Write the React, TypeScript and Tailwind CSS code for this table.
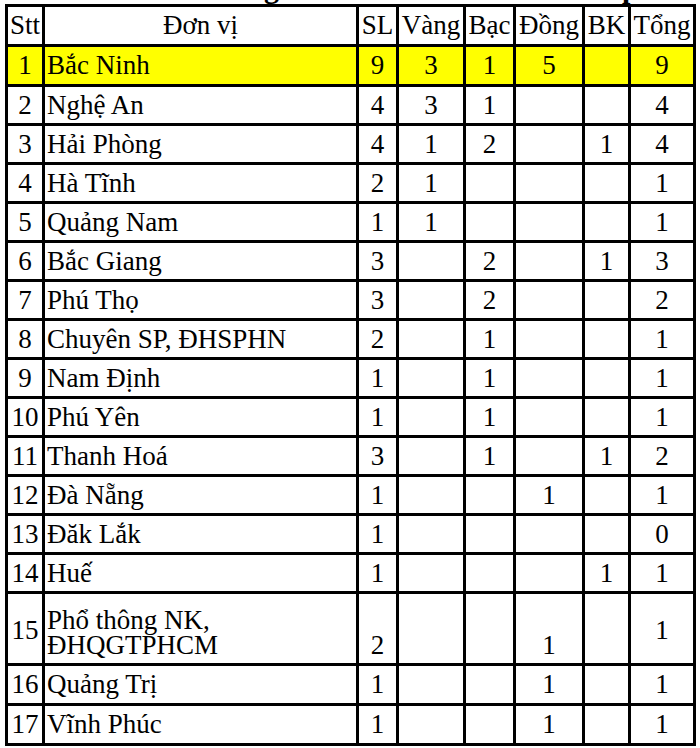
type Row = {
  stt: string;
  name: string;
  sl: string;
  vang?: string;
  bac?: string;
  dong?: string;
  bk?: string;
  tong: string;
};

const rows: Row[] = [
  { stt: "1", name: "Bắc Ninh", sl: "9", vang: "3", bac: "1", dong: "5", tong: "9" },
  { stt: "2", name: "Nghệ An", sl: "4", vang: "3", bac: "1", tong: "4" },
  { stt: "3", name: "Hải Phòng", sl: "4", vang: "1", bac: "2", bk: "1", tong: "4" },
  { stt: "4", name: "Hà Tĩnh", sl: "2", vang: "1", tong: "1" },
  { stt: "5", name: "Quảng Nam", sl: "1", vang: "1", tong: "1" },
  { stt: "6", name: "Bắc Giang", sl: "3", bac: "2", bk: "1", tong: "3" },
  { stt: "7", name: "Phú Thọ", sl: "3", bac: "2", tong: "2" },
  { stt: "8", name: "Chuyên SP, ĐHSPHN", sl: "2", bac: "1", tong: "1" },
  { stt: "9", name: "Nam Định", sl: "1", bac: "1", tong: "1" },
  { stt: "10", name: "Phú Yên", sl: "1", bac: "1", tong: "1" },
  { stt: "11", name: "Thanh Hoá", sl: "3", bac: "1", bk: "1", tong: "2" },
  { stt: "12", name: "Đà Nẵng", sl: "1", dong: "1", tong: "1" },
  { stt: "13", name: "Đăk Lắk", sl: "1", tong: "0" },
  { stt: "14", name: "Huế", sl: "1", bk: "1", tong: "1" },
];

const tail: Row[] = [
  { stt: "16", name: "Quảng Trị", sl: "1", dong: "1", tong: "1" },
  { stt: "17", name: "Vĩnh Phúc", sl: "1", dong: "1", tong: "1" },
];

const headers = ["Stt", "Đơn vị", "SL", "Vàng", "Bạc", "Đồng", "BK", "Tổng"];

function Cell({ children, left, yellow }: { children?: React.ReactNode; left?: boolean; yellow?: boolean }) {
  return (
    <div
      className={`flex items-center leading-none ${left ? "justify-start pl-[2px]" : "justify-center"} ${
        yellow ? "bg-[#ffff00]" : "bg-white"
      }`}
    >
      {children}
    </div>
  );
}

function DataRow({ row, yellow }: { row: Row; yellow?: boolean }) {
  return (
    <>
      <Cell yellow={yellow}>{row.stt}</Cell>
      <Cell left yellow={yellow}>{row.name}</Cell>
      <Cell yellow={yellow}>{row.sl}</Cell>
      <Cell yellow={yellow}>{row.vang}</Cell>
      <Cell yellow={yellow}>{row.bac}</Cell>
      <Cell yellow={yellow}>{row.dong}</Cell>
      <Cell yellow={yellow}>{row.bk}</Cell>
      <Cell yellow={yellow}>{row.tong}</Cell>
    </>
  );
}

export default function App() {
  return (
    <div className="w-[700px] h-[748px] overflow-hidden bg-white text-[27px] text-black font-['Liberation_Serif',serif]">
      {/* title above is cut off, only descenders show */}
      <div className="h-[4px] overflow-hidden">
        <div className="-mt-[27px] flex font-bold text-[30px] leading-[30px]">
          <span className="ml-[264px]">g</span>
          <span className="ml-[343px]">p</span>
        </div>
      </div>

      <div className="ml-[5px] w-fit grid grid-cols-[34px_311px_37px_64px_47px_66px_43px_62px] grid-rows-[37px_37px_repeat(13,36px)_69px_37px_37px] gap-[3px] p-[3px] bg-black">
        {headers.map((h) => (
          <Cell key={h}>{h}</Cell>
        ))}

        {rows.map((r, i) => (
          <DataRow key={r.stt} row={r} yellow={i === 0} />
        ))}

        {/* row 15 wraps onto two lines */}
        <div className="flex items-center justify-center bg-white leading-none pt-[3px]">15</div>
        <div className="flex items-end bg-white pl-[2px] pb-[5px] leading-[25px]">
          Phổ thông NK,
          <br />
          ĐHQGTPHCM
        </div>
        <div className="flex items-end justify-center bg-white pb-[5px] leading-[25px]">2</div>
        <div className="bg-white" />
        <div className="bg-white" />
        <div className="flex items-end justify-center bg-white pb-[5px] leading-[25px]">1</div>
        <div className="bg-white" />
        <div className="flex items-center justify-center bg-white leading-none pt-[3px]">1</div>

        {tail.map((r) => (
          <DataRow key={r.stt} row={r} />
        ))}
      </div>
    </div>
  );
}
